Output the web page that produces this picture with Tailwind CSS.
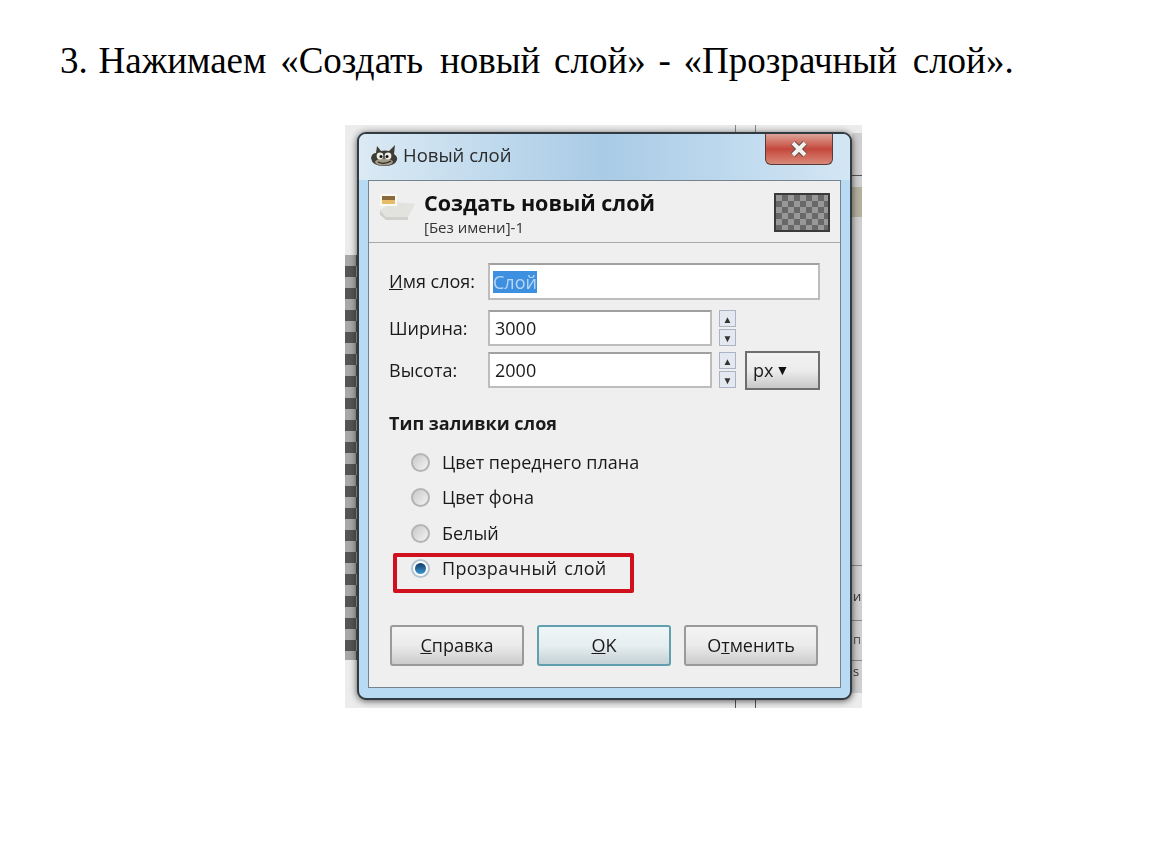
<!DOCTYPE html>
<html lang="en">
<head>
    <meta charset="UTF-8">
    <title>Создать новый слой</title>
    <script src="https://cdn.jsdelivr.net/npm/@tailwindcss/browser@4"></script>
</head>
<body class="bg-white">
    <div class="w-[1150px] h-[864px] overflow-hidden">
        <h1 class="pl-[60px] pt-[39px] h-[125px] font-['Liberation_Serif',serif] text-[37px] leading-[44px] text-black [word-spacing:1.5px] whitespace-nowrap">3. Нажимаем <span class="ml-[3px]">«Создать</span> <span class="ml-[6px]">новый</span> <span class="ml-[3px]">слой»</span> <span class="ml-[2px]">-</span> <span class="ml-[2px]">«Прозрачный</span> <span class="ml-[5px]">слой».</span></h1>

        <!-- screenshot of the dialog -->
        <div class="relative ml-[345px] w-[517px] h-[583px] pt-[7px] pl-[12px] bg-[#ececec] font-['Open_Sans',sans-serif] text-[#1a1a1a] blur-[0.6px] overflow-hidden">
            <!-- bits of the window behind -->
            <div class="absolute left-0 top-[130px] w-[12px] h-[405px] bg-[image:conic-gradient(#555_25%,#a8a8a8_0_50%,#555_0_75%,#a8a8a8_0)] bg-[length:22px_22px]"></div>
            <div class="absolute left-[390px] top-0 w-px h-[7px] bg-[#888]"></div>
            <div class="absolute left-[410px] top-0 w-px h-[7px] bg-[#888]"></div>
            <div class="absolute left-[390px] bottom-0 w-px h-[8px] bg-[#555]"></div>
            <div class="absolute left-[410px] bottom-0 w-px h-[8px] bg-[#555]"></div>
            <div class="absolute left-[507px] top-[8px] w-[10px] h-[560px] bg-[#cfcfcf]"></div>
            <div class="absolute left-[507px] top-[50px] w-[10px] h-px bg-[#555]"></div>
            <div class="absolute left-[507px] top-[62px] w-[10px] h-[30px] bg-[#b5b09e]"></div>
            <div class="absolute left-[507px] top-[440px] w-[10px] h-px bg-[#888]"></div>
            <div class="absolute left-[507px] top-[495px] w-[10px] h-px bg-[#888]"></div>
            <div class="absolute left-[507px] top-[535px] w-[10px] h-px bg-[#888]"></div>
            <span class="absolute left-[508px] top-[465px] text-[13px] leading-none text-[#333]">и</span>
            <span class="absolute left-[508px] top-[508px] text-[13px] leading-none text-[#555]">п</span>
            <span class="absolute left-[508px] top-[540px] text-[13px] leading-none text-[#333]">s</span>

            <!-- window -->
            <div class="relative w-[495px] h-[568px] flex flex-col rounded-[9px] border-2 border-[#323a42] bg-[#b8daf3] shadow-[0_1px_7px_rgba(0,0,0,0.65)]">
                <!-- title bar -->
                <div class="h-[46px] shrink-0 flex items-center pl-[11px] pr-[17px] rounded-t-[7px] bg-gradient-to-r from-[#dbeaf4] via-[#a9cbe6] to-[#d3e6f4]">
                    <svg class="w-[28px] h-[22px] mr-[5px] mt-[-2px]" viewBox="0 0 28 22">
                        <path d="M1 13 Q2 8 6 8 L7 1 L11 6 Q15 5 19 6 L25 0 L24 9 Q28 12 27 15 Q25 21 14 21 Q2 21 1 13 Z" fill="#3f3b35"/>
                        <ellipse cx="14" cy="17" rx="9" ry="3.5" fill="#a39a86"/>
                        <circle cx="10" cy="11" r="3.4" fill="#ecece6"/>
                        <circle cx="18" cy="11" r="3.4" fill="#ecece6"/>
                        <circle cx="11" cy="11.5" r="1.5" fill="#111"/>
                        <circle cx="17" cy="11.5" r="1.5" fill="#111"/>
                        <path d="M8 17 Q14 20 21 16" stroke="#222" stroke-width="1.2" fill="none"/>
                    </svg>
                    <span class="text-[18.5px] text-[#2b2b2b] mt-[-4px]">Новый слой</span>
                    <div class="ml-auto self-start w-[68px] h-[31px] flex items-center justify-center rounded-b-[6px] border border-t-0 border-[#5a3a36] bg-gradient-to-b from-[#dca399] via-[#c4463c] to-[#d88878]">
                        <svg class="w-[20px] h-[16px]" viewBox="0 0 20 16">
                            <path d="M4 2 L16 14 M16 2 L4 14" stroke="#5a4a48" stroke-width="6"/>
                            <path d="M4 2 L16 14 M16 2 L4 14" stroke="#f4f0ee" stroke-width="4"/>
                        </svg>
                    </div>
                </div>

                <!-- panel -->
                <div class="flex-1 mx-[9px] mb-[10px] border border-[#75838e] bg-[#efefef] flex flex-col">
                    <div class="h-[62px] shrink-0 flex border-b border-[#a8a8a8] pl-[9px] pr-[10px]">
                        <svg class="w-[38px] h-[30px] mt-[10px] mr-[8px]" viewBox="0 0 38 30">
                            <path d="M2 19 L8 26 L30 26 L37 13 L16 11 Z" fill="#e2e2de"/>
                            <path d="M2 19 L2 24 L8 29 L30 29 L30 26 L8 26 Z" fill="#d0d0cc"/>
                            <rect x="2" y="3" width="17" height="12" fill="#fbfaf2"/>
                            <rect x="4" y="5" width="13" height="4" fill="#8a6a3c"/>
                            <rect x="4" y="9" width="13" height="4" fill="#e6bc68"/>
                        </svg>
                        <div class="flex flex-col pt-[7px]">
                            <span class="text-[21.5px] leading-[29px] font-bold text-[#111]">Создать новый слой</span>
                            <span class="text-[15px] leading-[18px] mt-[1px] text-[#333]">[Без имени]-1</span>
                        </div>
                        <div class="ml-auto mt-[12px] w-[56px] h-[39px] border-2 border-[#3a3a3a] bg-[image:conic-gradient(#686868_25%,#989898_0_50%,#686868_0_75%,#989898_0)] bg-[length:12px_12px]"></div>
                    </div>

                    <div class="flex-1 flex flex-col pl-[20px] text-[18px]">
                        <!-- name -->
                        <div class="flex items-center h-[37px] mt-[20px]">
                            <span class="w-[99px]"><u>И</u>мя слоя:</span>
                            <div class="w-[332px] h-full border-2 border-[#bdbdbd] border-t-[#a0a0a0] bg-white flex items-center pl-[3px]">
                                <span class="bg-[#3d8fe0] text-[#b9d6f3] leading-[22px]">Слой</span>
                            </div>
                        </div>

                        <!-- size -->
                        <div class="flex items-center h-[36px] mt-[10px]">
                            <span class="w-[99px]">Ширина:</span>
                            <div class="w-[224px] h-full border-2 border-[#bdbdbd] border-t-[#a0a0a0] bg-white flex items-center pl-[5px]">3000</div>
                            <div class="ml-[7px] w-[17px] h-full flex flex-col gap-[2px]">
                                <div class="flex-1 flex items-center justify-center border border-[#aab4c4] bg-[#e4e8f0] text-[10px] leading-none text-[#333]">▲</div>
                                <div class="flex-1 flex items-center justify-center border border-[#aab4c4] bg-[#e4e8f0] text-[10px] leading-none text-[#333]">▼</div>
                            </div>
                        </div>
                        <div class="flex items-center h-[36px] mt-[6px]">
                            <span class="w-[99px]">Высота:</span>
                            <div class="w-[224px] h-full border-2 border-[#bdbdbd] border-t-[#a0a0a0] bg-white flex items-center pl-[5px]">2000</div>
                            <div class="ml-[7px] w-[17px] h-full flex flex-col gap-[2px]">
                                <div class="flex-1 flex items-center justify-center border border-[#aab4c4] bg-[#e4e8f0] text-[10px] leading-none text-[#333]">▲</div>
                                <div class="flex-1 flex items-center justify-center border border-[#aab4c4] bg-[#e4e8f0] text-[10px] leading-none text-[#333]">▼</div>
                            </div>
                            <div class="ml-[9px] w-[75px] h-[39px] flex items-center pl-[6px] border-2 border-[#6e6e6e] bg-gradient-to-b from-[#f2f2f2] via-[#ececec] to-[#c8c8c8]">
                                px<span class="ml-[2px] text-[14px] leading-none text-[#111]">▼</span>
                            </div>
                        </div>

                        <!-- fill type -->
                        <div class="mt-[23px] font-bold leading-[24px]">Тип заливки слоя</div>
                        <div class="flex flex-col mt-[10px] pl-[22px]">
                            <div class="flex items-center h-[35px]">
                                <span class="w-[19px] h-[19px] rounded-full border-2 border-[#b4b4b4] bg-gradient-to-br from-[#c8c8c8] to-[#f4f4f4]"></span>
                                <span class="ml-[12px]">Цвет переднего плана</span>
                            </div>
                            <div class="flex items-center h-[35px]">
                                <span class="w-[19px] h-[19px] rounded-full border-2 border-[#b4b4b4] bg-gradient-to-br from-[#c8c8c8] to-[#f4f4f4]"></span>
                                <span class="ml-[12px]">Цвет фона</span>
                            </div>
                            <div class="flex items-center h-[36px]">
                                <span class="w-[19px] h-[19px] rounded-full border-2 border-[#b4b4b4] bg-gradient-to-br from-[#c8c8c8] to-[#f4f4f4]"></span>
                                <span class="ml-[12px]">Белый</span>
                            </div>
                            <div class="relative flex items-center h-[35px]">
                                <span class="w-[19px] h-[19px] rounded-full border-2 border-[#b4c4d0] bg-white flex items-center justify-center">
                                    <span class="w-[11px] h-[11px] rounded-full bg-gradient-to-b from-[#123c66] to-[#3d9ad8]"></span>
                                </span>
                                <span class="ml-[12px] [word-spacing:2px] tracking-[0.3px]">Прозрачный слой</span>
                                <div class="absolute left-[-18px] top-[2px] w-[241px] h-[40px] border-4 border-[#d0101c] rounded-[2px]"></div>
                            </div>
                        </div>

                        <!-- buttons -->
                        <div class="flex gap-[13px] mt-[39px] ml-[1px]">
                            <div class="w-[134px] h-[41px] flex items-center justify-center rounded-[3px] border-2 border-[#9a9a9a] bg-gradient-to-b from-[#f4f4f4] via-[#ebebeb] to-[#cccccc]"><span><u>С</u>правка</span></div>
                            <div class="w-[134px] h-[41px] flex items-center justify-center rounded-[3px] border-2 border-[#5f9fae] bg-gradient-to-b from-[#eef6f8] via-[#e6eef0] to-[#c6d2d6]"><span><u>O</u>K</span></div>
                            <div class="w-[134px] h-[41px] flex items-center justify-center rounded-[3px] border-2 border-[#9a9a9a] bg-gradient-to-b from-[#f4f4f4] via-[#ebebeb] to-[#cccccc]"><span>О<u>т</u>менить</span></div>
                        </div>
                    </div>
                </div>
            </div>
        </div>
    </div>
</body>
</html>
